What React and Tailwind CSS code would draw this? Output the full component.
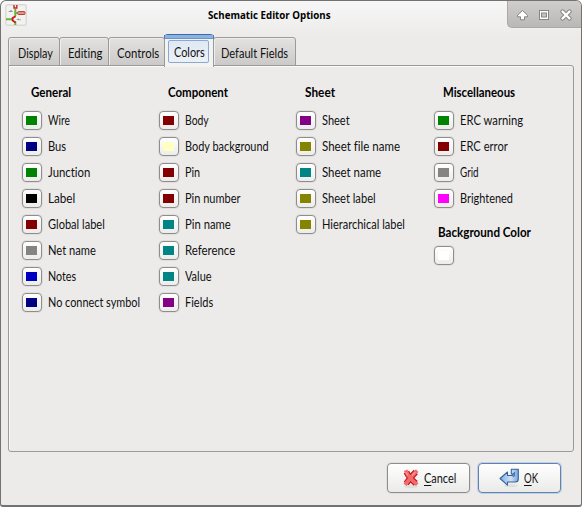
import { useLayoutEffect, useRef, useState } from "react";

// A line of text fitted horizontally to a fixed width.
function Fit({ w, className = "", children }) {
  const ref = useRef(null);
  const [scale, setScale] = useState(1);
  useLayoutEffect(() => {
    setScale(w / ref.current.offsetWidth);
  }, [w]);
  return (
    <span className={`block shrink-0 whitespace-nowrap ${className}`} style={{ width: w }}>
      <span ref={ref} className="inline-block origin-left" style={{ transform: `scaleX(${scale})` }}>
        {children}
      </span>
    </span>
  );
}

const columns = [
  {
    title: "General", tw: 40, width: "w-[137px]",
    items: [
      ["Wire", 22, "bg-[#008400]"],
      ["Bus", 18, "bg-[#000084]"],
      ["Junction", 42, "bg-[#008400]"],
      ["Label", 27, "bg-black"],
      ["Global label", 57, "bg-[#840000]"],
      ["Net name", 48, "bg-[#848484]"],
      ["Notes", 28, "bg-[#0000c2]"],
      ["No connect symbol", 92, "bg-[#000084]"],
    ],
  },
  {
    title: "Component", tw: 60, width: "w-[137px]",
    items: [
      ["Body", 24, "bg-[#840000]"],
      ["Body background", 84, "bg-[#ffffc2]"],
      ["Pin", 15, "bg-[#840000]"],
      ["Pin number", 56, "bg-[#840000]"],
      ["Pin name", 46, "bg-[#008484]"],
      ["Reference", 50, "bg-[#008484]"],
      ["Value", 27, "bg-[#008484]"],
      ["Fields", 28, "bg-[#840084]"],
    ],
  },
  {
    title: "Sheet", tw: 30, width: "w-[138px]",
    items: [
      ["Sheet", 28, "bg-[#840084]"],
      ["Sheet file name", 78, "bg-[#848400]"],
      ["Sheet name", 59, "bg-[#008484]"],
      ["Sheet label", 54, "bg-[#848400]"],
      ["Hierarchical label", 83, "bg-[#848400]"],
    ],
  },
  {
    title: "Miscellaneous", tw: 72, width: "w-[120px]",
    items: [
      ["ERC warning", 63, "bg-[#008400]"],
      ["ERC error", 48, "bg-[#840000]"],
      ["Grid", 19, "bg-[#848484]"],
      ["Brightened", 53, "bg-[#ff00ff]"],
    ],
  },
];

function Swatch({ color }) {
  return (
    <button className="flex h-[19px] w-5 shrink-0 items-center justify-center rounded-[4px] border border-[#8f8d8b] bg-linear-to-b from-white to-[#ececeb] pr-px shadow-[0_0_0_1px_#e0dfdd]">
      <span className={`block h-[9px] w-[11px] ${color}`} />
    </button>
  );
}

function Tab({ w, tw, pl = "pl-[8px]", children }) {
  return (
    <div className={`flex h-[29px] ${w} ${pl} -mr-px items-center rounded-t-[3px] border border-[#9b9a98] bg-linear-to-b from-[#e3e2e0] to-[#cbcac8] pt-[3px] shadow-[inset_1px_1px_0_#efeeed]`}>
      <Fit w={tw}>{children}</Fit>
    </div>
  );
}

function AppIcon() {
  return (
    <svg width="22" height="22" viewBox="0 0 22 22" className="shrink-0">
      <rect x=".8" y=".8" width="20.4" height="20.4" rx="2" fill="#f2f2f1" stroke="#d9d9d8" strokeWidth="1.4" />
      <path d="M10.3 5v7M1 15.2h6M10.3 17.5v3.5M10.3 9h2.2" stroke="#66b53c" strokeWidth="2" fill="none" />
      <path d="M9 1v3h2.8V1" stroke="#d02020" strokeWidth="1.4" fill="none" />
      <rect x="12.6" y="7.6" width="7.4" height="2.9" rx="1" fill="#dc9a8a" stroke="#c23a30" />
      <path d="M10.6 12.2L7.6 14v2.6l3 1.8" stroke="#c81818" strokeWidth="1.8" fill="none" />
      <path d="M3 8l3.6-2.2v1.4h1.2V8zM11.3 16l1-.8 1.6-1v1.2h2.2v.8z" fill="#8d8d8d" />
    </svg>
  );
}

function WindowControls() {
  return (
    <div className="h-[27px] w-[74px] shrink-0 rounded-bl-[5px] rounded-tr-[5px] border-b border-l border-[#aaa9a7] bg-linear-to-b from-[#cfcecd] to-[#b9b8b7]">
      <svg width="73" height="26" viewBox="0 0 73 26">
        <path d="M14.5 9.5L9.5 14.2v1.6h3v3h4v-3h3v-1.6z" fill="#fff" stroke="#858585" strokeLinejoin="round" />
        <rect x="31.5" y="9.5" width="9" height="9" fill="#fff" stroke="#858585" />
        <rect x="33.5" y="12" width="5" height="4" fill="#c4c3c2" stroke="#858585" />
        <path d="M54.5 10.5l7 7M61.5 10.5l-7 7" stroke="#858585" strokeWidth="4.4" strokeLinecap="round" />
        <path d="M54.5 10.5l7 7M61.5 10.5l-7 7" stroke="#fff" strokeWidth="2.4" strokeLinecap="round" />
      </svg>
    </div>
  );
}

function CancelIcon() {
  return (
    <svg width="18" height="21" viewBox="0 0 18 21" className="shrink-0">
      <ellipse cx="9" cy="18.6" rx="7" ry="1.6" fill="#dededc" />
      <path d="M4.4 4q2.6 5.6 9.4 11.4M13.8 4Q9 8.600 4.200 15.400" stroke="#c5161d" strokeWidth="6" fill="none" />
      <path d="M4.4 4q2.600 5.600 9.400 11.400M13.800 4Q9 8.600 4.200 15.400" stroke="#f26a6a" strokeWidth="3.800" strokeLinecap="square" fill="none" />
      <path d="M3.800 4.200l2 3.200M13.200 4.200l-3 3.200" stroke="#f9a09e" strokeWidth="1.200" fill="none" />
    </svg>
  );
}

function OkIcon() {
  return (
    <svg width="22" height="20" viewBox="0 0 22 20" className="shrink-0">
      <defs>
        <linearGradient id="okArrow" x1="0" y1="0" x2="1" y2="0">
          <stop offset="0" stopColor="#82aee0" />
          <stop offset=".6" stopColor="#cfe1f4" />
          <stop offset="1" stopColor="#79a5d8" />
        </linearGradient>
      </defs>
      <ellipse cx="12" cy="17.7" rx="7" ry="1.4" fill="#dededc" />
      <path d="M1 10.5L8.5 4v3.5h5V6h-1.200V1.200h7V11q0 3-3 3H8.500v3.200z" fill="url(#okArrow)" stroke="#34639f" strokeWidth="1.1" strokeLinejoin="round" />
      <path d="M13.2 6.6l2.4-2.4v3.4q0 1-1.800 1.200" fill="#5989c4" stroke="#34639f" strokeWidth=".7" />
    </svg>
  );
}

export default function App() {
  return (
    <div className="h-[507px] w-[582px] overflow-hidden bg-white font-['Lato',sans-serif] text-[13px] leading-4 text-[#111] [font-variant-ligatures:none]">
      <div className="flex h-full w-full flex-col rounded-t-[6px] rounded-b-[3px] border border-b-2 border-[#747270] bg-[#ecebea] bg-linear-to-b from-[#f7f7f7] to-[#ecebea] to-[36px]">
        <header className="flex h-[36px] shrink-0 items-start">
          <div className="pl-1 pt-[3px]">
            <AppIcon />
          </div>
          <Fit w={123} className="ml-[181px] mr-auto mt-[6px] font-['Open_Sans',sans-serif] text-[10.5px] font-bold text-black">
            Schematic Editor Options
          </Fit>
          <WindowControls />
        </header>

        <div className="-mt-[3px] flex h-[32px] shrink-0 items-end pl-[7px]">
          <Tab w="w-[52px]" tw={35} pl="pl-[9px]">Display</Tab>
          <Tab w="w-[50px]" tw={34}>Editing</Tab>
          <Tab w="w-[57px]" tw={42}>Controls</Tab>
          <div className="relative z-10 -mb-px -mr-px flex h-[33px] w-[50px] flex-col rounded-t-[4px] border border-b-0 border-[#9b9a98] border-t-[#386ca8] bg-[#f3f3f2]">
            <div className="-mx-px h-1 shrink-0 border-x border-b border-[#4c7bb2] border-b-[#6d96c6] bg-[#8cb2df]" />
            <div className="ml-[3px] mt-px flex h-[23px] w-[41px] items-center rounded-[2px] border border-[#8ba9d0] bg-linear-to-b from-[#dfe8f4] to-[#edf1f7] pl-[5px]">
              <Fit w={31}>Colors</Fit>
            </div>
          </div>
          <Tab w="w-[83px]" tw={67} pl="pl-[7px]">Default Fields</Tab>
        </div>

        <main className="-mt-px ml-[7px] flex h-[387px] w-[566px] shrink-0 flex-col rounded-[3px] rounded-tl-none border border-[#9b9a98] pl-[13px] pt-[18px] shadow-[inset_1px_1px_0_#fafafa]">
          <div className="flex">
            {columns.map((col) => (
              <section key={col.title} className={`${col.width} shrink-0`}>
                <h2 className="h-[27px] pl-[9px] font-bold text-black">
                  <Fit w={col.tw}>{col.title}</Fit>
                </h2>
                <ul>
                  {col.items.map(([label, w, color]) => (
                    <li key={label} className="flex h-[26px] items-start gap-[6px]">
                      <Swatch color={color} />
                      <Fit w={w} className="mt-px">{label}</Fit>
                    </li>
                  ))}
                </ul>
                {col.title === "Miscellaneous" && (
                  <div className="pt-[9px]">
                    <h2 className="mb-[6px] ml-1 h-4 font-bold text-black">
                      <Fit w={93}>Background Color</Fit>
                    </h2>
                    <Swatch color="bg-white" />
                  </div>
                )}
              </section>
            ))}
          </div>
        </main>

        <footer className="mt-[11px] flex gap-[8px] pl-[386px]">
          <button className="flex h-[30px] w-[83px] items-center rounded-[4px] border border-[#8f8d8b] bg-linear-to-b from-white to-[#eaeae9] pl-[14px] shadow-[0_0_0_1px_#e0dfdd]">
            <CancelIcon />
            <Fit w={32} className="ml-1"><span className="underline underline-offset-2">C</span>ancel</Fit>
          </button>
          <button className="flex h-[30px] w-[83px] items-center rounded-[4px] border border-[#5f83b5] bg-linear-to-b from-white to-[#eaeae9] pl-[20px] shadow-[0_0_0_1px_#c3cfdf]">
            <OkIcon />
            <Fit w={14} className="ml-[3px]"><span className="underline underline-offset-2">O</span>K</Fit>
          </button>
        </footer>
      </div>
    </div>
  );
}
